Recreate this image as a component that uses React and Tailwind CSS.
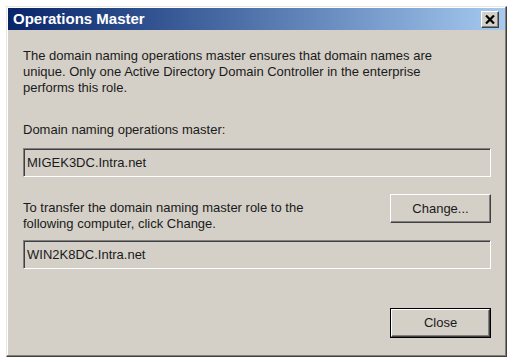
import React from 'react';

const font = { fontFamily: '"Liberation Sans", Arial, sans-serif' };

const Field = ({ value }) => (
  <div className="h-[29px] w-[468px] flex items-center pl-[3px] bg-[#d4d0c8] border border-t-[#808080] border-l-[#808080] border-b-white border-r-white shadow-[inset_1px_1px_0_#404040] text-[13px] text-[#1a1a1a]">
    {value}
  </div>
);

const Button = ({ label, isDefault }) => (
  <div className={isDefault ? 'border border-black' : ''}>
    <div
      className={`${isDefault ? 'w-[99px] h-[28px]' : 'w-[101px] h-[29px]'} flex items-center justify-center bg-[#d4d0c8] border border-t-white border-l-white border-b-[#404040] border-r-[#404040] shadow-[inset_-1px_-1px_0_#808080] text-[13px] text-[#1a1a1a]`}
    >
      {label}
    </div>
  </div>
);

const App = () => {
  return (
    <div className="w-[514px] h-[363px] bg-white pt-[6px] pl-[6px]" style={font}>
      <div className="w-[501px] h-[351px] bg-[#d4d0c8] border border-t-[#e8e6e0] border-l-[#e8e6e0] border-b-[#404040] border-r-[#404040] shadow-[inset_-1px_-1px_0_#808080,inset_1px_1px_0_#ffffff] p-[1px] flex flex-col">
        {/* title bar */}
        <div className="h-[22px] flex items-center justify-between pl-[5px] pr-[6px] bg-gradient-to-r from-[#0a246a] to-[#a6caf0]">
          <span className="text-white font-bold text-[15px]">Operations Master</span>
          <div className="w-[18px] h-[17px] flex items-center justify-center bg-[#d4d0c8] border border-t-white border-l-white border-b-[#404040] border-r-[#404040] shadow-[inset_-1px_-1px_0_#808080]">
            <svg width="10" height="9" viewBox="0 0 10 9">
              <path d="M1 0.5 L9 8.5 M9 0.5 L1 8.5" stroke="#000" strokeWidth="2.2" />
            </svg>
          </div>
        </div>

        {/* body */}
        <div className="flex-1 flex flex-col pl-[15px] pt-[18px] text-[13px] leading-[16px] text-[#1a1a1a]">
          <p>
            The domain naming operations master ensures that domain names are
            <br />
            unique. Only one Active Directory Domain Controller in the enterprise
            <br />
            performs this role.
          </p>
          <p className="mt-[26px]">Domain naming operations master:</p>
          <div className="mt-[10px]">
            <Field value="MIGEK3DC.Intra.net" />
          </div>
          <div className="mt-[17px] w-[468px] flex items-start justify-between">
            <p className="mt-[6px]">
              To transfer the domain naming master role to the
              <br />
              following computer, click Change.
            </p>
            <Button label="Change..." />
          </div>
          <div className="mt-[8px]">
            <Field value="WIN2K8DC.Intra.net" />
          </div>
          <div className="mt-[39px] w-[468px] flex justify-end">
            <Button label="Close" isDefault />
          </div>
        </div>
      </div>
    </div>
  );
};

export default App;
